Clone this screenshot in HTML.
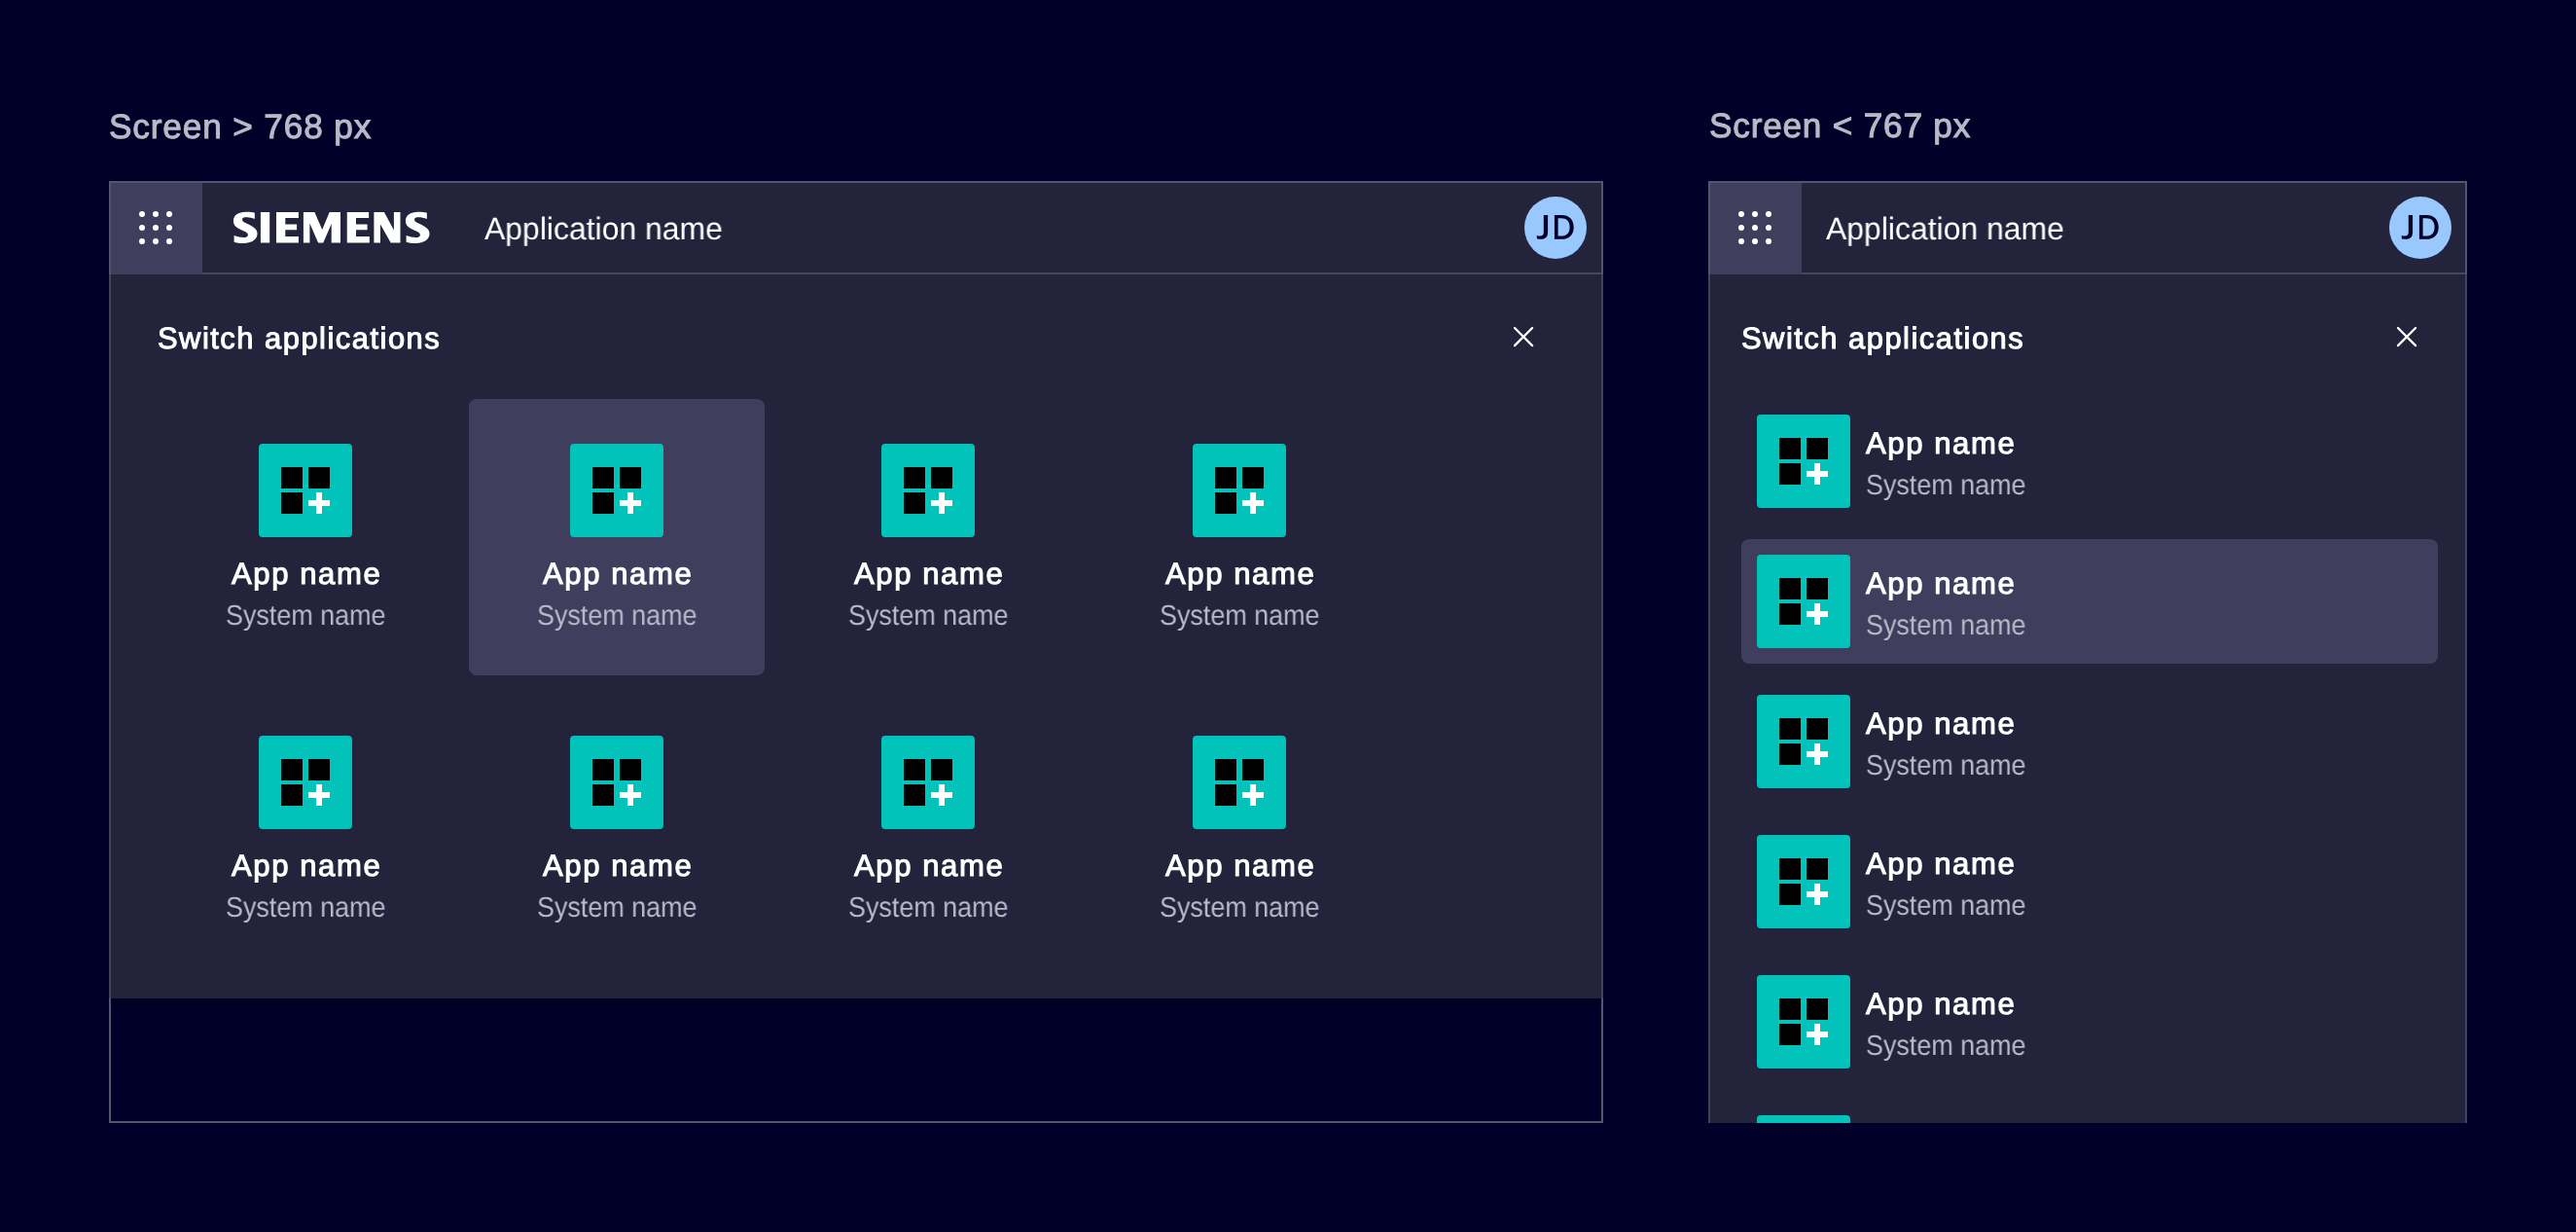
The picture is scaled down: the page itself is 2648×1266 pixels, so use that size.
<!DOCTYPE html>
<html><head><meta charset="utf-8"><style>
*{margin:0;padding:0;box-sizing:border-box}
html,body{width:2648px;height:1266px;overflow:hidden;background:#000028;font-family:"Liberation Sans",sans-serif}
.a{position:absolute}
.tx{position:absolute;white-space:nowrap;transform-origin:0 0;text-rendering:geometricPrecision;will-change:transform}
.ico{position:absolute;width:96px;height:96px;background:#01c3b9;border-radius:4px}
.ico i{position:absolute;display:block}
.sq{width:22px;height:22px;background:#000}
.ph{left:51px;top:58px;width:22px;height:6px;background:#fff}
.pv{left:59px;top:50px;width:6px;height:22px;background:#fff}
.dot{position:absolute;width:6.4px;height:6.4px;border-radius:50%;background:#fff}
</style></head><body>

<div class="a" style="left:112px;top:186px;width:1536px;height:968px;border:2px solid #555570;background:#000028"></div>
<div class="a" style="left:114px;top:188px;width:1532px;height:838px;background:#23233c;box-shadow:0 8px 8px -6px rgba(0,0,0,0.3)"></div>
<div class="a" style="left:112px;top:282px;width:2px;height:744px;background:#43435a"></div>
<div class="a" style="left:1646px;top:282px;width:2px;height:744px;background:#43435a"></div>
<div class="a" style="left:114px;top:280px;width:1532px;height:2px;background:#46465f"></div>
<div class="a" style="left:114px;top:188px;width:94px;height:94px;background:#403e5d"></div>
<div class="a" style="left:1756px;top:186px;width:780px;height:968px;border:2px solid #555570;border-bottom:none;background:#23233c"></div>
<div class="a" style="left:1756px;top:282px;width:2px;height:872px;background:#43435a"></div>
<div class="a" style="left:2534px;top:282px;width:2px;height:872px;background:#43435a"></div>
<div class="a" style="left:1758px;top:280px;width:776px;height:2px;background:#46465f"></div>
<div class="a" style="left:1758px;top:188px;width:94px;height:94px;background:#403e5d"></div>
<div class="dot" style="left:142.8px;top:216.8px"></div>
<div class="dot" style="left:156.8px;top:216.8px"></div>
<div class="dot" style="left:170.8px;top:216.8px"></div>
<div class="dot" style="left:142.8px;top:230.8px"></div>
<div class="dot" style="left:156.8px;top:230.8px"></div>
<div class="dot" style="left:170.8px;top:230.8px"></div>
<div class="dot" style="left:142.8px;top:244.8px"></div>
<div class="dot" style="left:156.8px;top:244.8px"></div>
<div class="dot" style="left:170.8px;top:244.8px"></div>
<div class="dot" style="left:1786.8px;top:216.8px"></div>
<div class="dot" style="left:1800.8px;top:216.8px"></div>
<div class="dot" style="left:1814.8px;top:216.8px"></div>
<div class="dot" style="left:1786.8px;top:230.8px"></div>
<div class="dot" style="left:1800.8px;top:230.8px"></div>
<div class="dot" style="left:1814.8px;top:230.8px"></div>
<div class="dot" style="left:1786.8px;top:244.8px"></div>
<div class="dot" style="left:1800.8px;top:244.8px"></div>
<div class="dot" style="left:1814.8px;top:244.8px"></div>
<div class="a" style="left:1567px;top:202px;width:64px;height:64px;border-radius:50%;background:#99c8ff"></div>
<div class="a" style="left:2455.5px;top:202px;width:64px;height:64px;border-radius:50%;background:#99c8ff"></div>
<svg class="a" style="left:1570px;top:212px" width="60" height="44" viewBox="1570 212 60 44"><path fill="#000028" fill-rule="evenodd" d="M1586.8 221.1H1591.1V238.5C1591.1 243.3 1588.5 245.75 1584.3 245.75C1582.6 245.75 1581 245.5 1579.8 245.2V241.9C1580.9 242.3 1582.2 242.5 1583.3 242.5C1585.7 242.5 1586.8 241.3 1586.8 238.3ZM1597.9 221.1H1605.2C1613 221.1 1617.7 225.8 1617.7 233.4C1617.7 241 1613 245.75 1605.2 245.75H1597.9ZM1601.6 224.3V242.5H1604.9C1610.5 242.5 1613.6 239.3 1613.6 233.4C1613.6 227.5 1610.5 224.3 1604.9 224.3Z"/></svg>
<svg class="a" style="left:2458.5px;top:212px" width="60" height="44" viewBox="1570 212 60 44"><path fill="#000028" fill-rule="evenodd" d="M1586.8 221.1H1591.1V238.5C1591.1 243.3 1588.5 245.75 1584.3 245.75C1582.6 245.75 1581 245.5 1579.8 245.2V241.9C1580.9 242.3 1582.2 242.5 1583.3 242.5C1585.7 242.5 1586.8 241.3 1586.8 238.3ZM1597.9 221.1H1605.2C1613 221.1 1617.7 225.8 1617.7 233.4C1617.7 241 1613 245.75 1605.2 245.75H1597.9ZM1601.6 224.3V242.5H1604.9C1610.5 242.5 1613.6 239.3 1613.6 233.4C1613.6 227.5 1610.5 224.3 1604.9 224.3Z"/></svg>
<svg class="a" style="left:1554px;top:334px" width="24" height="24" viewBox="0 0 24 24"><path d="M3 3L21.1 21.1M21.1 3L3 21.1" stroke="#fff" stroke-width="2.3" stroke-linecap="round"/></svg>
<svg class="a" style="left:2462px;top:334px" width="24" height="24" viewBox="0 0 24 24"><path d="M3 3L21.1 21.1M21.1 3L3 21.1" stroke="#fff" stroke-width="2.3" stroke-linecap="round"/></svg>
<div class="a" style="left:482px;top:410px;width:304px;height:284px;border-radius:8px;background:#403e5d"></div>
<div class="a" style="left:1790px;top:554px;width:716px;height:128px;border-radius:8px;background:#403e5d"></div>
<div class="ico" style="left:266px;top:456px"><i class="sq" style="left:23px;top:24px"></i><i class="sq" style="left:51px;top:24px"></i><i class="sq" style="left:23px;top:50px"></i><i class="ph"></i><i class="pv"></i></div>
<div class="ico" style="left:586px;top:456px"><i class="sq" style="left:23px;top:24px"></i><i class="sq" style="left:51px;top:24px"></i><i class="sq" style="left:23px;top:50px"></i><i class="ph"></i><i class="pv"></i></div>
<div class="ico" style="left:906px;top:456px"><i class="sq" style="left:23px;top:24px"></i><i class="sq" style="left:51px;top:24px"></i><i class="sq" style="left:23px;top:50px"></i><i class="ph"></i><i class="pv"></i></div>
<div class="ico" style="left:1226px;top:456px"><i class="sq" style="left:23px;top:24px"></i><i class="sq" style="left:51px;top:24px"></i><i class="sq" style="left:23px;top:50px"></i><i class="ph"></i><i class="pv"></i></div>
<div class="ico" style="left:266px;top:756px"><i class="sq" style="left:23px;top:24px"></i><i class="sq" style="left:51px;top:24px"></i><i class="sq" style="left:23px;top:50px"></i><i class="ph"></i><i class="pv"></i></div>
<div class="ico" style="left:586px;top:756px"><i class="sq" style="left:23px;top:24px"></i><i class="sq" style="left:51px;top:24px"></i><i class="sq" style="left:23px;top:50px"></i><i class="ph"></i><i class="pv"></i></div>
<div class="ico" style="left:906px;top:756px"><i class="sq" style="left:23px;top:24px"></i><i class="sq" style="left:51px;top:24px"></i><i class="sq" style="left:23px;top:50px"></i><i class="ph"></i><i class="pv"></i></div>
<div class="ico" style="left:1226px;top:756px"><i class="sq" style="left:23px;top:24px"></i><i class="sq" style="left:51px;top:24px"></i><i class="sq" style="left:23px;top:50px"></i><i class="ph"></i><i class="pv"></i></div>
<div class="a" style="left:1758px;top:282px;width:776px;height:872px;overflow:hidden">
<div class="ico" style="left:48px;top:144px"><i class="sq" style="left:23px;top:24px"></i><i class="sq" style="left:51px;top:24px"></i><i class="sq" style="left:23px;top:50px"></i><i class="ph"></i><i class="pv"></i></div>
<div class="ico" style="left:48px;top:288px"><i class="sq" style="left:23px;top:24px"></i><i class="sq" style="left:51px;top:24px"></i><i class="sq" style="left:23px;top:50px"></i><i class="ph"></i><i class="pv"></i></div>
<div class="ico" style="left:48px;top:432px"><i class="sq" style="left:23px;top:24px"></i><i class="sq" style="left:51px;top:24px"></i><i class="sq" style="left:23px;top:50px"></i><i class="ph"></i><i class="pv"></i></div>
<div class="ico" style="left:48px;top:576px"><i class="sq" style="left:23px;top:24px"></i><i class="sq" style="left:51px;top:24px"></i><i class="sq" style="left:23px;top:50px"></i><i class="ph"></i><i class="pv"></i></div>
<div class="ico" style="left:48px;top:720px"><i class="sq" style="left:23px;top:24px"></i><i class="sq" style="left:51px;top:24px"></i><i class="sq" style="left:23px;top:50px"></i><i class="ph"></i><i class="pv"></i></div>
<div class="ico" style="left:48px;top:864px"><i class="sq" style="left:23px;top:24px"></i><i class="sq" style="left:51px;top:24px"></i><i class="sq" style="left:23px;top:50px"></i><i class="ph"></i><i class="pv"></i></div>
</div>
<svg class="a" style="left:236px;top:214px" width="210" height="40" viewBox="236 214 210 40"><g fill="#fff">
<path transform="translate(239.9 217.8)" d="M21.96 0.89L21.96 7.14C18.04 5.54 13.75 5.0 11.25 5.54C9.11 6.07 8.75 8.04 9.46 9.11C10.54 10.54 13.39 11.61 16.96 13.39C21.96 15.89 24.64 18.39 24.64 22.32C24.64 28.39 19.11 32.14 10.18 32.14C6.25 32.14 3.04 31.61 0.71 30.89L0.71 24.29C3.75 25.54 7.68 26.25 10.54 26.25C13.39 26.25 15.0 25.18 15.0 23.39C15.0 21.61 13.04 20.54 9.82 19.11C3.75 16.61 0 14.11 0 9.11C0 3.75 4.82 0 13.04 0C16.61 0 19.82 0.36 21.96 0.89Z"/>
<rect x="267.9" y="218.0" width="9.3" height="31.5"/>
<path d="M284.0 218.0L306.9 218.0L306.9 224.1L293.3 224.1L293.3 230.5L305.1 230.5L305.1 236.3L293.3 236.3L293.3 242.9L306.9 242.9L306.9 249.5L284.0 249.5Z"/>
<path d="M311.9 218.0L323.4 218.0L331.2 235.9L338.7 218.0L350.0 218.0L350.0 249.5L340.7 249.5L340.7 229.9L332.3 249.5L327.1 249.5L318.4 229.5L318.4 249.5L311.9 249.5Z"/>
<path d="M356.75 218.0L379.1 218.0L379.1 224.1L366.0 224.1L366.0 230.5L377.6 230.5L377.6 236.3L366.0 236.3L366.0 242.9L379.8 242.9L379.8 249.5L356.75 249.5Z"/>
<path d="M384.4 218.0L394.9 218.0L404.9 236.6L404.9 218.0L411.5 218.0L411.5 249.5L401.7 249.5L391.0 230.6L391.0 249.5L384.4 249.5Z"/>
<path transform="translate(416.9 217.8)" d="M21.96 0.89L21.96 7.14C18.04 5.54 13.75 5.0 11.25 5.54C9.11 6.07 8.75 8.04 9.46 9.11C10.54 10.54 13.39 11.61 16.96 13.39C21.96 15.89 24.64 18.39 24.64 22.32C24.64 28.39 19.11 32.14 10.18 32.14C6.25 32.14 3.04 31.61 0.71 30.89L0.71 24.29C3.75 25.54 7.68 26.25 10.54 26.25C13.39 26.25 15.0 25.18 15.0 23.39C15.0 21.61 13.04 20.54 9.82 19.11C3.75 16.61 0 14.11 0 9.11C0 3.75 4.82 0 13.04 0C16.61 0 19.82 0.36 21.96 0.89Z"/>
</g></svg>
<div class="tx" style="left:112.40px;top:113.08px;font-size:35.2px;line-height:35.2px;font-weight:400;color:#b9b9c8;-webkit-text-stroke:1.0px #b9b9c8;letter-spacing:0.857px;transform:scaleX(1.0000)">Screen &gt; 768 px</div>
<div class="tx" style="left:1756.50px;top:112.13px;font-size:35.2px;line-height:35.2px;font-weight:400;color:#b9b9c8;-webkit-text-stroke:1.0px #b9b9c8;letter-spacing:0.786px;transform:scaleX(1.0000)">Screen &lt; 767 px</div>
<div class="tx" style="left:497.56px;top:218.84px;font-size:32.4px;line-height:32.4px;font-weight:400;color:#fff;transform:scaleX(0.9852)">Application name</div>
<div class="tx" style="left:1876.67px;top:218.84px;font-size:32.4px;line-height:32.4px;font-weight:400;color:#fff;transform:scaleX(0.9852)">Application name</div>
<div class="tx" style="left:162.00px;top:332.76px;font-size:30.9px;line-height:30.9px;font-weight:400;color:#fff;-webkit-text-stroke:1.0px #fff;letter-spacing:1.500px;transform:scaleX(1.0000)">Switch applications</div>
<div class="tx" style="left:1790.10px;top:332.76px;font-size:30.9px;line-height:30.9px;font-weight:400;color:#fff;-webkit-text-stroke:1.0px #fff;letter-spacing:1.500px;transform:scaleX(1.0000)">Switch applications</div>
<div class="tx" style="left:238.20px;top:573.73px;font-size:31.1px;line-height:31.1px;font-weight:400;color:#fff;-webkit-text-stroke:1.0px #fff;letter-spacing:1.571px;transform:scaleX(1.0000)">App name</div>
<div class="tx" style="left:232.08px;top:619.20px;font-size:29.15px;line-height:29.15px;font-weight:400;color:#b9b9c8;transform:scaleX(0.9228)">System name</div>
<div class="tx" style="left:558.20px;top:573.73px;font-size:31.1px;line-height:31.1px;font-weight:400;color:#fff;-webkit-text-stroke:1.0px #fff;letter-spacing:1.571px;transform:scaleX(1.0000)">App name</div>
<div class="tx" style="left:552.08px;top:619.20px;font-size:29.15px;line-height:29.15px;font-weight:400;color:#b9b9c8;transform:scaleX(0.9228)">System name</div>
<div class="tx" style="left:878.20px;top:573.73px;font-size:31.1px;line-height:31.1px;font-weight:400;color:#fff;-webkit-text-stroke:1.0px #fff;letter-spacing:1.571px;transform:scaleX(1.0000)">App name</div>
<div class="tx" style="left:872.08px;top:619.20px;font-size:29.15px;line-height:29.15px;font-weight:400;color:#b9b9c8;transform:scaleX(0.9228)">System name</div>
<div class="tx" style="left:1198.20px;top:573.73px;font-size:31.1px;line-height:31.1px;font-weight:400;color:#fff;-webkit-text-stroke:1.0px #fff;letter-spacing:1.571px;transform:scaleX(1.0000)">App name</div>
<div class="tx" style="left:1192.08px;top:619.20px;font-size:29.15px;line-height:29.15px;font-weight:400;color:#b9b9c8;transform:scaleX(0.9228)">System name</div>
<div class="tx" style="left:238.20px;top:873.73px;font-size:31.1px;line-height:31.1px;font-weight:400;color:#fff;-webkit-text-stroke:1.0px #fff;letter-spacing:1.571px;transform:scaleX(1.0000)">App name</div>
<div class="tx" style="left:232.08px;top:919.20px;font-size:29.15px;line-height:29.15px;font-weight:400;color:#b9b9c8;transform:scaleX(0.9228)">System name</div>
<div class="tx" style="left:558.20px;top:873.73px;font-size:31.1px;line-height:31.1px;font-weight:400;color:#fff;-webkit-text-stroke:1.0px #fff;letter-spacing:1.571px;transform:scaleX(1.0000)">App name</div>
<div class="tx" style="left:552.08px;top:919.20px;font-size:29.15px;line-height:29.15px;font-weight:400;color:#b9b9c8;transform:scaleX(0.9228)">System name</div>
<div class="tx" style="left:878.20px;top:873.73px;font-size:31.1px;line-height:31.1px;font-weight:400;color:#fff;-webkit-text-stroke:1.0px #fff;letter-spacing:1.571px;transform:scaleX(1.0000)">App name</div>
<div class="tx" style="left:872.08px;top:919.20px;font-size:29.15px;line-height:29.15px;font-weight:400;color:#b9b9c8;transform:scaleX(0.9228)">System name</div>
<div class="tx" style="left:1198.20px;top:873.73px;font-size:31.1px;line-height:31.1px;font-weight:400;color:#fff;-webkit-text-stroke:1.0px #fff;letter-spacing:1.571px;transform:scaleX(1.0000)">App name</div>
<div class="tx" style="left:1192.08px;top:919.20px;font-size:29.15px;line-height:29.15px;font-weight:400;color:#b9b9c8;transform:scaleX(0.9228)">System name</div>
<div class="tx" style="left:1918.00px;top:439.73px;font-size:31.1px;line-height:31.1px;font-weight:400;color:#fff;-webkit-text-stroke:1.0px #fff;letter-spacing:1.571px;transform:scaleX(1.0000)">App name</div>
<div class="tx" style="left:1917.97px;top:485.26px;font-size:29.15px;line-height:29.15px;font-weight:400;color:#b9b9c8;transform:scaleX(0.9228)">System name</div>
<div class="tx" style="left:1918.00px;top:583.73px;font-size:31.1px;line-height:31.1px;font-weight:400;color:#fff;-webkit-text-stroke:1.0px #fff;letter-spacing:1.571px;transform:scaleX(1.0000)">App name</div>
<div class="tx" style="left:1917.97px;top:629.26px;font-size:29.15px;line-height:29.15px;font-weight:400;color:#b9b9c8;transform:scaleX(0.9228)">System name</div>
<div class="tx" style="left:1918.00px;top:727.73px;font-size:31.1px;line-height:31.1px;font-weight:400;color:#fff;-webkit-text-stroke:1.0px #fff;letter-spacing:1.571px;transform:scaleX(1.0000)">App name</div>
<div class="tx" style="left:1917.97px;top:773.26px;font-size:29.15px;line-height:29.15px;font-weight:400;color:#b9b9c8;transform:scaleX(0.9228)">System name</div>
<div class="tx" style="left:1918.00px;top:871.73px;font-size:31.1px;line-height:31.1px;font-weight:400;color:#fff;-webkit-text-stroke:1.0px #fff;letter-spacing:1.571px;transform:scaleX(1.0000)">App name</div>
<div class="tx" style="left:1917.97px;top:917.26px;font-size:29.15px;line-height:29.15px;font-weight:400;color:#b9b9c8;transform:scaleX(0.9228)">System name</div>
<div class="tx" style="left:1918.00px;top:1015.73px;font-size:31.1px;line-height:31.1px;font-weight:400;color:#fff;-webkit-text-stroke:1.0px #fff;letter-spacing:1.571px;transform:scaleX(1.0000)">App name</div>
<div class="tx" style="left:1917.97px;top:1061.26px;font-size:29.15px;line-height:29.15px;font-weight:400;color:#b9b9c8;transform:scaleX(0.9228)">System name</div>
</body></html>
